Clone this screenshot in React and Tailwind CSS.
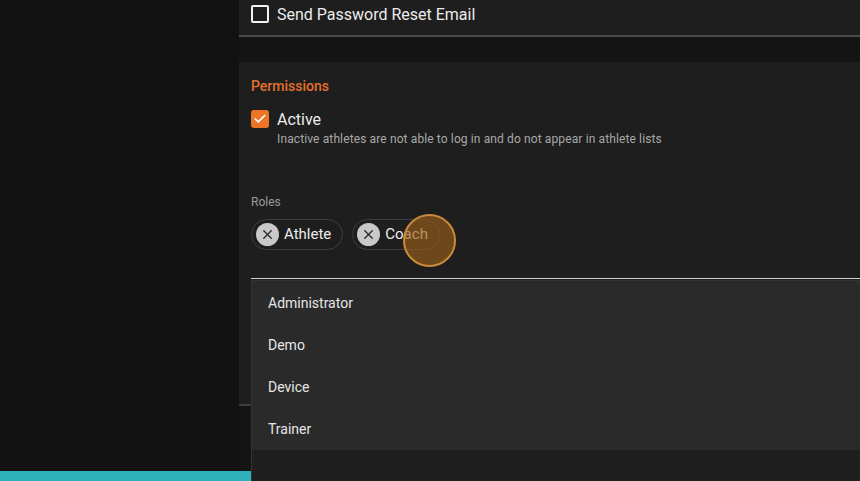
import { Check, X } from 'lucide-react';

const roleOptions = ['Administrator', 'Demo', 'Device', 'Trainer'];
const selectedRoles = ['Athlete', 'Coach'];

const RoleChip = ({ label }) => (
  <div className="flex items-center h-[31px] pl-[4px] pr-[11px] rounded-full border border-[#3d3d3d]">
    <span className="flex items-center justify-center w-[23px] h-[23px] rounded-full bg-[#c9c9c9] text-[#2a2a2a]">
      <X size={15} strokeWidth={2.2} />
    </span>
    <span className="ml-[5px] text-[15px] text-[#ececec]">{label}</span>
  </div>
);

export default function App() {
  return (
    <div className="relative h-[481px] w-[860px] overflow-hidden bg-[#121212] font-['Roboto',sans-serif] flex flex-col">
      <div className="flex flex-1 min-h-0">
        {/* left rail */}
        <div className="w-[239px] shrink-0 bg-[#121212]" />

        {/* form column */}
        <div className="flex-1 flex flex-col bg-[#141414]">
          <div className="h-[37px] bg-[#1e1e1e] border-b-2 border-[#4a4a4a] px-3 flex items-start pt-[5px]">
            <span className="w-[18px] h-[18px] rounded-[2px] border-2 border-[#f2f2f2]" />
            <span className="ml-[8px] text-[16px] leading-[19px] text-[#ececec]">Send Password Reset Email</span>
          </div>

          <div className="h-[25px]" />

          <div className="h-[344px] bg-[#1e1e1e] border-b-2 border-[#3c3c3c] px-3 pt-[14px]">
            <div className="text-[14px] leading-[20px] font-medium text-[#e26f2c]">Permissions</div>

            <div className="mt-[14px] flex items-start">
              <span className="flex items-center justify-center w-[18px] h-[18px] rounded-[3px] bg-[#ec7425] text-white">
                <Check size={14} strokeWidth={3} />
              </span>
              <div className="ml-[8px]">
                <div className="text-[16px] leading-[20px] text-[#ececec]">Active</div>
                <div className="mt-[1px] text-[12px] leading-[16px] tracking-[0.12px] text-[#a8a8a8]">
                  Inactive athletes are not able to log in and do not appear in athlete lists
                </div>
              </div>
            </div>

            <div className="mt-[47px] text-[12px] leading-[16px] text-[#9a9a9a]">Roles</div>
            <div className="mt-[9px] flex gap-[9px]">
              {selectedRoles.map((r) => (
                <RoleChip key={r} label={r} />
              ))}
            </div>
            <div className="mt-[28px] -mr-3 h-[1px] bg-[#d0d0d0]" />
          </div>

          <div className="flex-1" />
        </div>
      </div>

      {/* bottom bar */}
      <div className="h-[10px] bg-[#2fb1b9]" />

      {/* roles dropdown menu */}
      <div className="absolute left-[251px] top-[280px] right-0 bottom-0 bg-[#1f1f1f] border-l border-[#3e3e3e] border-t border-[#333]">
        <div className="bg-[#2a2a2a] pt-[1px]">
          {roleOptions.map((opt) => (
            <div key={opt} className="h-[42px] flex items-center px-[16px] text-[14px] text-[#e6e6e6]">
              {opt}
            </div>
          ))}
        </div>
      </div>

      {/* click indicator */}
      <div className="absolute left-[403px] top-[214px] w-[53px] h-[53px] rounded-full bg-[#9a5d18]/65 border-2 border-[#c88a3c]" />
    </div>
  );
}
